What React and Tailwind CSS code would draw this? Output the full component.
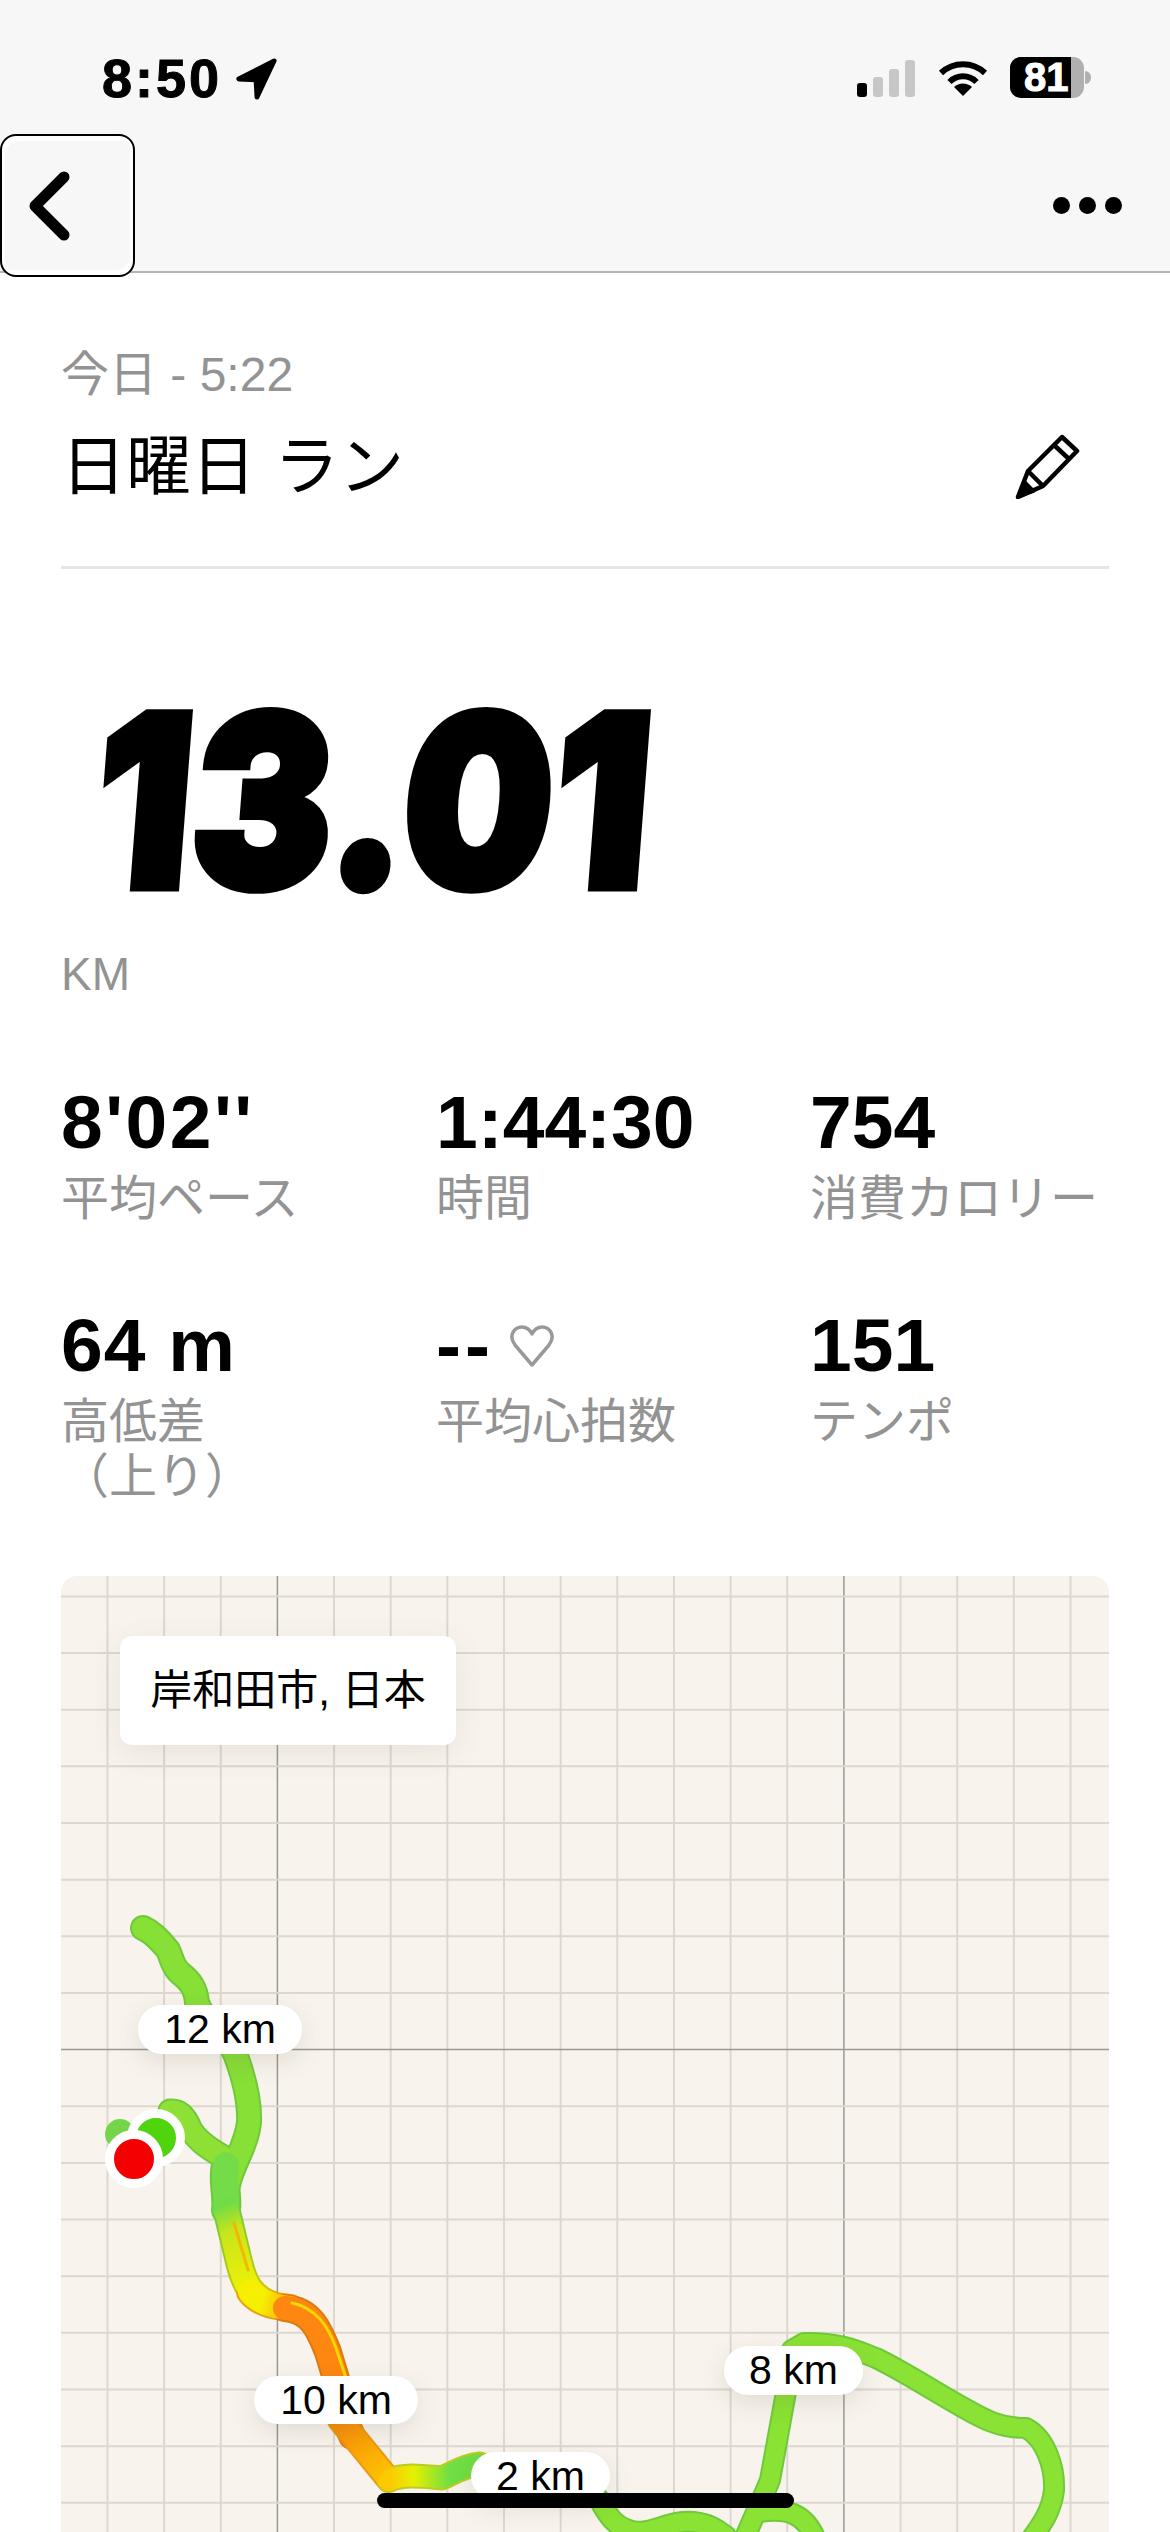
const stats = [
  { value: "8'02''", label: "平均ペース", track: "tracking-[2.5px]" },
  { value: "1:44:30", label: "時間" },
  { value: "754", label: "消費カロリー" },
  { value: "64 m", label: "高低差\n（上り）", track: "tracking-[1px]" },
  { value: "--", label: "平均心拍数", heart: true, track: "tracking-[4px]" },
  { value: "151", label: "テンポ" },
];

const xs = [];
const ys = [];
for (let i = 0; i < 19; i++) xs.push(50.8 + i * 56.65);
for (let i = 0; i < 18; i++) ys.push(1596.4 + i * 56.65);

const segments = [
  { color: "#86e036", width: 26, d: "M143 1928 C152 1932 160 1940 168 1950 C172 1958 172 1966 180 1973 C190 1981 196 1988 197 2003 C205 2025 226 2030 236 2056 C244 2078 250 2100 249 2122 C247 2145 232 2165 228 2185" },
  { color: "#8fe034", width: 25, d: "M170 2111 C180 2110 186 2118 190 2128 C196 2140 208 2148 222 2156 L226 2176" },
  { color: "#74dc48", width: 30, d: "M226 2165 C222 2180 228 2195 226 2210" },
  { color: "url(#up)", edge: "url(#upEdge)", width: 28, d: "M226 2208 L239 2262 C244 2282 250 2296 270 2304" },
  { color: "url(#hot)", edge: "#e8a010", width: 28, d: "M250 2292 C258 2302 270 2306 290 2308" },
  { color: "#fd8710", edge: "#dd7a10", width: 28, d: "M285 2308 C312 2310 320 2332 328 2352 L340 2392 L345 2420 L352 2436" },
  { color: "url(#cool)", edge: "#e89a10", width: 26, d: "M340 2420 L389 2480" },
  { color: "url(#flat)", edge: "#bccc20", width: 25, d: "M389 2480 C405 2474 420 2476 442 2478 C452 2474 462 2466 480 2464" },
  { color: "#8ae234", width: 22, d: "M598 2498 C606 2510 612 2530 640 2532 C660 2530 672 2520 694 2522 C712 2524 720 2532 726 2536" },
  { color: "#8ae234", width: 22, d: "M744 2540 C752 2520 762 2500 770 2480 L786 2392 L792 2350 L804 2343 C840 2342 860 2352 876 2358 C905 2372 935 2392 964 2408 C985 2420 1000 2428 1026 2428 C1045 2438 1055 2466 1054 2490 C1052 2510 1042 2524 1032 2538" },
  { color: "#8ae234", width: 22, d: "M760 2512 C785 2508 805 2512 816 2540" },
];

const MapLabel = ({ className, children }) => (
  <div
    className={
      "absolute flex items-center justify-center rounded-[24px] bg-white text-[41px] leading-none text-black shadow-[0_8px_24px_rgba(90,80,60,0.14)] " +
      className
    }
  >
    {children}
  </div>
);

const RouteMap = () => (
  <svg className="absolute inset-0 h-[956px] w-[1049px]" viewBox="61 1576 1049 956">
    <defs>
      <linearGradient id="up" gradientUnits="userSpaceOnUse" x1="225" y1="2205" x2="262" y2="2300">
        <stop offset="0" stopColor="#72dc46" />
        <stop offset="0.25" stopColor="#c8e41c" />
        <stop offset="1" stopColor="#f6f500" />
      </linearGradient>
      <linearGradient id="upEdge" gradientUnits="userSpaceOnUse" x1="225" y1="2205" x2="262" y2="2300">
        <stop offset="0" stopColor="#6ccb42" />
        <stop offset="1" stopColor="#d8c800" />
      </linearGradient>
      <linearGradient id="hot" gradientUnits="userSpaceOnUse" x1="262" y1="2300" x2="305" y2="2312">
        <stop offset="0" stopColor="#f6f000" />
        <stop offset="1" stopColor="#ff8a0c" />
      </linearGradient>
      <linearGradient id="cool" gradientUnits="userSpaceOnUse" x1="340" y1="2420" x2="392" y2="2482">
        <stop offset="0" stopColor="#fb8a0a" />
        <stop offset="1" stopColor="#fcc800" />
      </linearGradient>
      <linearGradient id="flat" gradientUnits="userSpaceOnUse" x1="389" y1="2480" x2="450" y2="2478">
        <stop offset="0" stopColor="#fcc800" />
        <stop offset="0.4" stopColor="#e6f000" />
        <stop offset="1" stopColor="#70de44" />
      </linearGradient>
    </defs>
    <rect x="61" y="1576" width="1049" height="956" fill="#f8f4ed" />
    {xs.map((x, i) => (
      <line
        key={x}
        x1={x}
        x2={x}
        y1="1576"
        y2="2532"
        stroke={i === 4 || i === 14 ? "#9a9893" : "#dcd8cf"}
        strokeWidth={i === 4 || i === 14 ? 1.5 : 2}
      />
    ))}
    {ys.map((y, i) => (
      <line
        key={y}
        x1="61"
        x2="1110"
        y1={y}
        y2={y}
        stroke={i === 8 ? "#9a9893" : "#dcd8cf"}
        strokeWidth={i === 8 ? 1.5 : 2}
      />
    ))}

    <g fill="none" strokeLinecap="round" strokeLinejoin="round">
      {segments.map((s) => (
        <path key={s.d} d={s.d} stroke={s.edge || "#70c93c"} strokeWidth={s.width} />
      ))}
      {segments.map((s) => (
        <path key={s.d} d={s.d} stroke={s.color} strokeWidth={s.width - 4} />
      ))}
      <path d="M234 2223 L248 2270" stroke="#f2b800" strokeWidth="3" />
      <path d="M292 2303 C316 2308 328 2326 336 2348 L348 2384" stroke="#f2d800" strokeWidth="3" />
    </g>
    <circle cx="120" cy="2134" r="15" fill="#74d44a" />
  </svg>
);

const Marker = ({ className, color }) => (
  <div className={"absolute h-[58px] w-[58px] rounded-full border-[9px] border-white " + className} style={{ backgroundColor: color }} />
);

export default function App() {
  return (
    <div
      className="relative h-[2532px] w-[1170px] overflow-hidden bg-white text-black"
      style={{ fontFamily: '"Liberation Sans", "Noto Sans CJK JP", sans-serif' }}
    >
      <header className="border-b-2 border-[#b4b4b4] bg-[#f7f7f7]">
        <div className="flex h-[134px] items-start justify-between pl-[102px] pr-[79px] pt-[57px]">
          <div className="flex items-start">
            <span className="text-[54px] font-bold leading-[42px] tracking-[3px] [-webkit-text-stroke:1px_#000]">8:50</span>
            <svg className="ml-[12px] h-[44px] w-[44px]" viewBox="233 56 46 46">
              <path d="M275 60 L238 79 L256 80 L257 98 Z" fill="#000" stroke="#000" strokeWidth="5" strokeLinejoin="round" />
            </svg>
          </div>
          <div className="flex items-start">
            <div className="mt-[2px] flex h-[38px] items-end gap-[6px]">
              <div className="h-[14px] w-[10px] rounded-[3px] bg-black" />
              <div className="h-[20px] w-[10px] rounded-[3px] bg-[#c7c7c7]" />
              <div className="h-[28px] w-[10px] rounded-[3px] bg-[#c7c7c7]" />
              <div className="h-[37px] w-[10px] rounded-[3px] bg-[#c7c7c7]" />
            </div>
            <svg className="ml-[23px] mt-[2px] h-[37px] w-[50px]" viewBox="0 0 50 37">
              <path d="M3 14 A32 32 0 0 1 47 14" fill="none" stroke="#000" strokeWidth="6" />
              <path d="M11.5 23 A19 19 0 0 1 38.5 23" fill="none" stroke="#000" strokeWidth="6" />
              <path d="M25 37 L16 28 A13 13 0 0 1 34 28 Z" fill="#000" />
            </svg>
            <div className="ml-[22px] flex items-center">
              <div className="relative h-[41px] w-[74px] rounded-[11px] bg-[#b0b0b0]">
                <div className="h-full w-[61px] rounded-l-[11px] bg-black" />
                <span className="absolute left-[14px] top-0 text-[40px] font-bold leading-[41px] text-white [-webkit-text-stroke:1px_#fff]">81</span>
              </div>
              <div className="ml-[1px] h-[13px] w-[6px] rounded-r-full bg-[#b0b0b0]" />
            </div>
          </div>
        </div>
        <div className="flex h-[137px] items-start justify-between pr-[48px]">
          <button className="relative z-10 flex h-[143px] w-[135px] items-center rounded-[16px] border-2 border-black bg-[#f7f7f7] pl-[24px] shadow-[inset_3px_5px_0_#fff,inset_-3px_-5px_0_#fff]">
            <svg className="h-[72px] w-[46px]" viewBox="0 0 46 72">
              <path d="M38 7 L9 36 L38 65" fill="none" stroke="#000" strokeWidth="11" strokeLinecap="round" strokeLinejoin="round" />
            </svg>
          </button>
          <div className="mt-[63px] flex gap-[9px]">
            <div className="h-[17px] w-[17px] rounded-full bg-black" />
            <div className="h-[17px] w-[17px] rounded-full bg-black" />
            <div className="h-[17px] w-[17px] rounded-full bg-black" />
          </div>
        </div>
      </header>

      <main className="px-[61px]">
        <div className="border-b-[3px] border-[#e5e5e5] pb-[60px] pt-[74px]">
          <div className="text-[48px] leading-[56px] text-[#939393]">今日 - 5:22</div>
          <div className="mt-[25px] flex items-start justify-between">
            <h1 className="text-[65px] leading-[78px]">日曜日 ラン</h1>
            <svg className="mr-[29px] mt-[5px] h-[66px] w-[66px]" viewBox="1012 434 66 66">
              <path
                d="M1016 498 L1026 472 L1060 438 L1075 452 L1041 487 Z M1052 446 L1067 460 M1026 472 L1041 487"
                fill="none"
                stroke="#000"
                strokeWidth="4.5"
                strokeLinejoin="round"
                strokeLinecap="round"
              />
              <path d="M1016 498 L1022 482 L1032 492 Z" fill="#000" stroke="#000" strokeWidth="3" strokeLinejoin="round" />
            </svg>
          </div>
        </div>

        <div className="mt-[106px] h-[250px] overflow-visible">
          <div
            className="origin-top-left scale-x-[0.88] skew-x-[-5deg] whitespace-nowrap pl-[52px] text-[238px] font-black leading-[250px] tracking-[2px] [-webkit-text-stroke:9px_#000]"
            style={{ fontFamily: '"Inter", sans-serif' }}
          >
            13.01
          </div>
        </div>

        <div className="mt-[21px] text-[46px] leading-[56px] text-[#939393]">KM</div>

        <div className="mt-[83px] grid grid-cols-[375px_374px_1fr] gap-y-[65px]">
          {stats.map((s) => (
            <div key={s.value} className="h-[158px]">
              <div className={"flex h-[75px] items-center text-[75px] font-bold leading-[75px] " + (s.track || "")}>
                {s.value}
                {s.heart && (
                  <svg className="ml-[15px] h-[44px] w-[46px]" viewBox="0 0 46 44">
                    <path
                      d="M23 41 L6 21 C-1 12 5 3 13 3 C18 3 21 6 23 10 C25 6 28 3 33 3 C41 3 47 12 40 21 Z"
                      fill="none"
                      stroke="#999"
                      strokeWidth="3.5"
                      strokeLinejoin="round"
                    />
                  </svg>
                )}
              </div>
              <div className="mt-[11px] whitespace-pre-line text-[48px] leading-[55px] text-[#939393]">{s.label}</div>
            </div>
          ))}
        </div>

        <div className="relative mt-[110px] h-[956px] overflow-hidden rounded-t-[16px]">
          <RouteMap />
          <div className="absolute left-[59px] top-[60px] flex h-[109px] w-[336px] items-center justify-center rounded-[12px] bg-white text-[42px] text-black shadow-[0_8px_30px_rgba(90,80,60,0.1)]">
            岸和田市, 日本
          </div>
          <MapLabel className="left-[77px] top-[429px] h-[49px] w-[164px]">12 km</MapLabel>
          <MapLabel className="left-[193px] top-[800px] h-[48px] w-[164px]">10 km</MapLabel>
          <MapLabel className="left-[410px] top-[876px] h-[48px] w-[139px]">2 km</MapLabel>
          <MapLabel className="left-[663px] top-[770px] h-[49px] w-[139px]">8 km</MapLabel>
          <Marker className="left-[66px] top-[533px]" color="#4fd40e" />
          <Marker className="left-[44px] top-[554px]" color="#f50000" />
        </div>
      </main>

      <div className="absolute bottom-[24px] left-[377px] h-[15px] w-[417px] rounded-full bg-black" />
    </div>
  );
}
